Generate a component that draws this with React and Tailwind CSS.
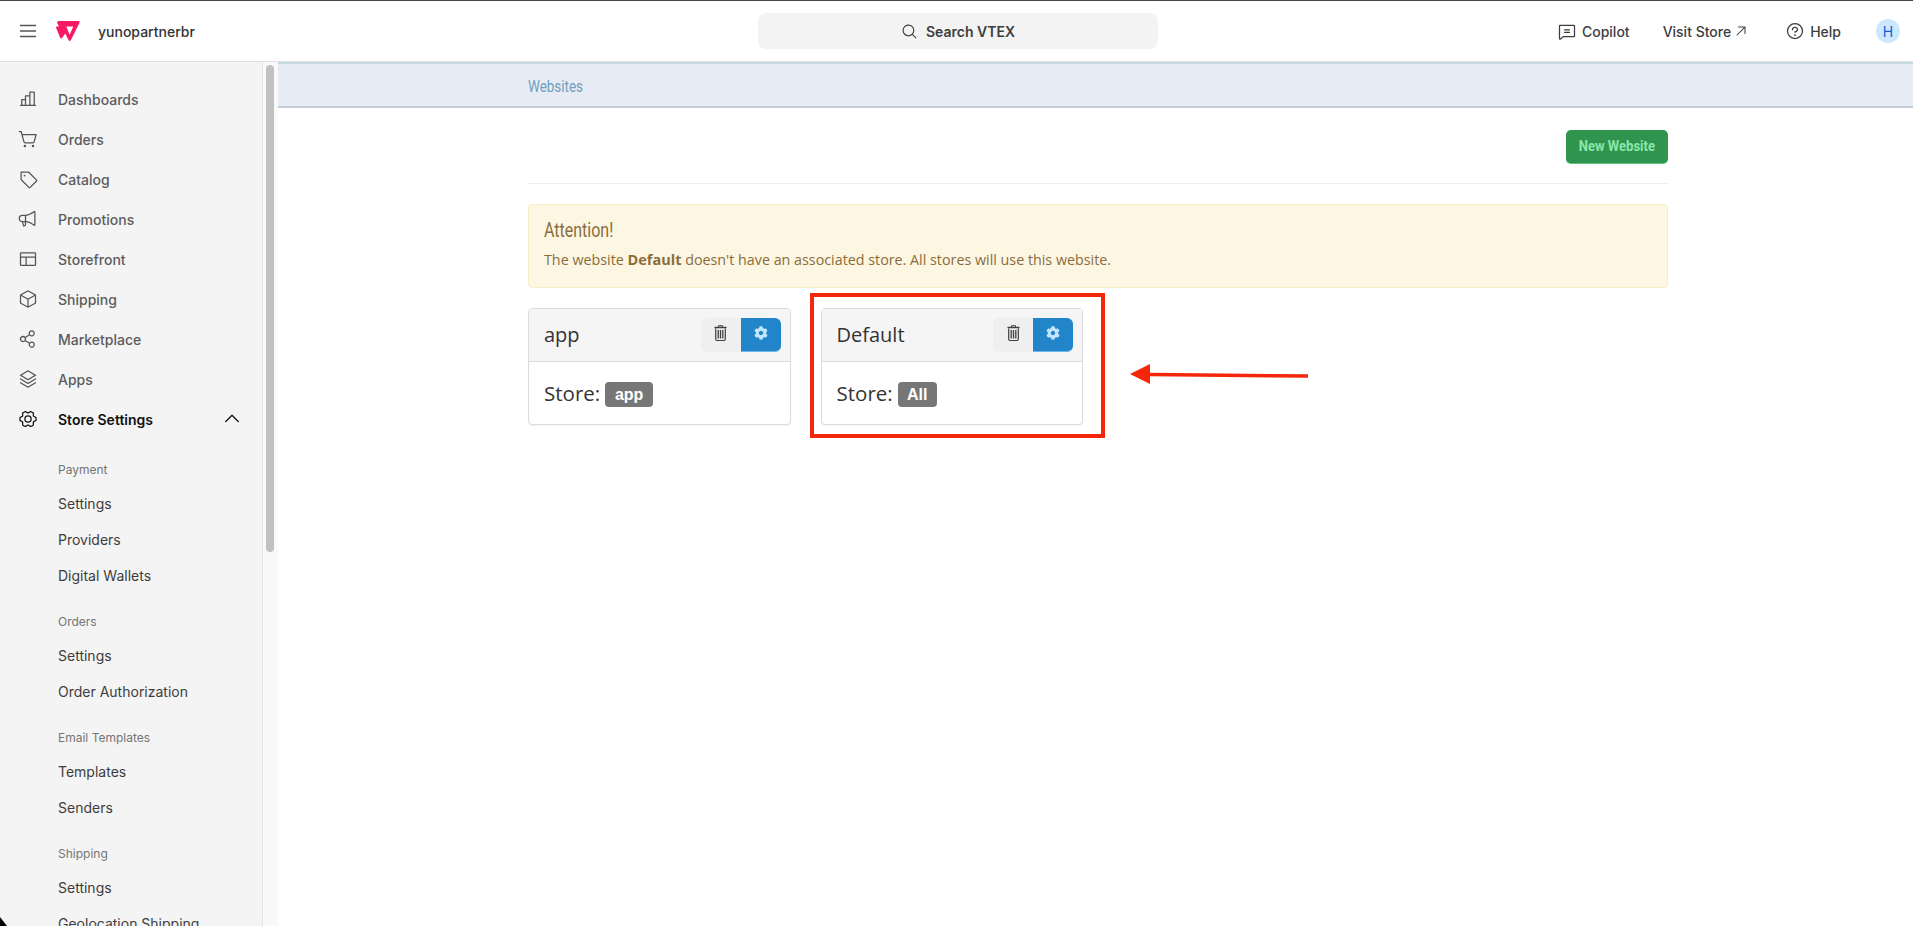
import {
  PiList,
  PiMagnifyingGlass,
  PiChatText,
  PiArrowUpRight,
  PiQuestion,
  PiChartBar,
  PiShoppingCartSimple,
  PiTag,
  PiMegaphone,
  PiLayout,
  PiCube,
  PiShareNetwork,
  PiStack,
  PiGearSix,
  PiCaretUp,
} from 'react-icons/pi';
import { FaCog } from 'react-icons/fa';

const navItems = [
  { label: 'Dashboards', icon: PiChartBar },
  { label: 'Orders', icon: PiShoppingCartSimple },
  { label: 'Catalog', icon: PiTag },
  { label: 'Promotions', icon: PiMegaphone, flip: true },
  { label: 'Storefront', icon: PiLayout },
  { label: 'Shipping', icon: PiCube },
  { label: 'Marketplace', icon: PiShareNetwork },
  { label: 'Apps', icon: PiStack },
];

const subGroups = [
  { title: 'Payment', items: ['Settings', 'Providers', 'Digital Wallets'] },
  { title: 'Orders', items: ['Settings', 'Order Authorization'] },
  { title: 'Email Templates', items: ['Templates', 'Senders'] },
  { title: 'Shipping', items: ['Settings', 'Geolocation Shipping'] },
];

function VtexLogo() {
  return (
    <svg width="24" height="20" viewBox="0 0 24 20" className="block">
      <path
        fill="#f71963"
        fillRule="evenodd"
        d="M2.6 0H22.4c1 0 1.500.8 1.100 1.700L14.800 19.200c-.5 1-1.700 1-2.200 0L9.300 12.500 6 17c-.5.700-1.300.600-1.700-.1L.2 7c-.4-.8.100-1.500 1-1.500H3L1.300 2.200C.9 1 1.500 0 2.600 0ZM10.300 5.400H17.300L13.600 13.800Z"
      />
    </svg>
  );
}

function TrashIcon() {
  return (
    <svg width="13" height="16" viewBox="0 0 13 16" className="mb-[5px] block" fill="none" stroke="#3f3f3f">
      <path d="M4.500 2V.7h4V2" />
      <path d="M.5 2.500h12" strokeWidth="1.400" />
      <path d="M1.700 3.500V14a1.500 1.500 0 0 0 1.500 1.500h6.600a1.500 1.500 0 0 0 1.500-1.500V3.500" strokeWidth="1.200" />
      <path d="M4.200 5v8.500M6.500 5v8.500M8.800 5v8.500" strokeWidth="1.300" />
    </svg>
  );
}

function WebsiteCard({ name, store, badgeWidth }) {
  return (
    <div className="w-[262.5px] overflow-hidden rounded-[4px] border border-[#dcdcdc] bg-white shadow-[0_1px_1px_rgba(0,0,0,0.05)]">
      <div className="flex h-[53px] items-center justify-between border-b border-[#dcdcdc] bg-[#f5f5f5] pl-[15px] pr-[9px]">
        <span className="text-[20px] text-[#333]">{name}</span>
        <div className="flex h-[34px]">
          <button className="flex w-[40px] items-center justify-center rounded-l-[6px] bg-[#efefef]">
            <TrashIcon />
          </button>
          <button className="flex w-[40px] items-center justify-center rounded-r-[6px] border-b border-[#6fb5e6] bg-[#2385c9] text-[#c4e6ff]">
            <FaCog size={14} className="mb-[3px]" />
          </button>
        </div>
      </div>
      <div className="flex h-[62px] items-center gap-[5px] pl-[15px] text-[20.5px] text-[#333]">
        <span>Store:</span>
        <span className={`mt-[3px] flex h-[25px] ${badgeWidth} items-center justify-center rounded-[4px] bg-[#777777] font-['Liberation_Sans',sans-serif] text-[16px] font-bold text-white`}>
          {store}
        </span>
      </div>
    </div>
  );
}

export default function App() {
  return (
    <div className="relative flex h-[926px] w-full flex-col overflow-hidden border-t border-[#444444] bg-white font-['Inter',sans-serif] text-[#3d3d3d]">
      <header className="relative flex h-[61px] shrink-0 items-center border-b border-[#e0e0e0] bg-white">
        <div className="flex w-[758px] items-center">
          <PiList size={22} className="ml-[17px] text-[#555]" />
          <span className="ml-[17px]"><VtexLogo /></span>
          <span className="ml-[18px] text-[14px] font-medium text-[#333]">yunopartnerbr</span>
        </div>
        <div className="flex h-[36px] w-[400px] items-center justify-center gap-[8px] rounded-[8px] bg-[#f3f3f3] text-[14px] font-semibold">
          <PiMagnifyingGlass size={17} />
          <span>Search VTEX</span>
        </div>
        <div className="ml-auto flex items-center text-[14px] font-medium">
          <PiChatText size={20} />
          <span className="ml-[5px]">Copilot</span>
          <span className="ml-[33px]">Visit Store</span>
          <PiArrowUpRight size={16} className="ml-[2px]" />
          <PiQuestion size={20} className="ml-[36px]" />
          <span className="ml-[5px]">Help</span>
          <span className="ml-[35px] mr-[13px] flex h-[24px] w-[24px] items-center justify-center rounded-full bg-[#cce8ff] text-[14px] font-normal text-[#0b5fd8]">H</span>
        </div>
      </header>

      <div className="flex min-h-0 flex-1">
        <aside className="flex w-[278px] shrink-0 overflow-hidden">
          <nav className="w-[263px] shrink-0 border-r border-[#e4e4e4] bg-[#f4f4f4] pt-[17px]">
            {navItems.map((item) => (
              <a key={item.label} className="flex h-[40px] items-center pl-[18px] text-[14px] font-medium text-[#5c5c5c]">
                <item.icon size={20} className={item.flip ? 'text-[#555] -scale-x-100' : 'text-[#555]'} />
                <span className="ml-[20px]">{item.label}</span>
              </a>
            ))}
            <a className="flex h-[40px] items-center pl-[18px] pr-[20px] text-[14px] font-semibold text-[#111]">
              <PiGearSix size={20} />
              <span className="ml-[20px]">Store Settings</span>
              <PiCaretUp size={20} className="ml-auto" />
            </a>
            <div className="pl-[58px] pt-[18px]">
              {subGroups.map((group) => (
                <div key={group.title} className="mb-[16px]">
                  <div className="mb-[4px] flex h-[24px] items-center pt-[2px] text-[12px] text-[#757575]">{group.title}</div>
                  {group.items.map((item) => (
                    <div key={item} className="flex h-[36px] items-center text-[14px] text-[#3d3d3d]">{item}</div>
                  ))}
                </div>
              ))}
            </div>
          </nav>
          <div className="w-[15px] bg-[#f9f9f9] pl-[3px] pt-[3px]">
            <div className="h-[487px] w-[8px] rounded-[4px] bg-[#c1c1c1]" />
          </div>
        </aside>

        <main className="min-w-0 flex-1 font-['Open_Sans',sans-serif]">
          <div className="flex h-[46px] items-center border-y-2 border-t-[#c9d9e2] border-b-[#c7ced9] bg-[#e7ecf4] pl-[250px] pt-[4px] font-['Roboto',sans-serif] text-[17px] text-[#6f9dbd]">
            <span className="inline-block origin-left scale-x-[0.79]">Websites</span>
          </div>
          <div className="ml-[250px] w-[1140px]">
            <div className="flex justify-end border-b border-[#eeeeee] pb-[19px] pt-[22px]">
              <button className="h-[34px] w-[102px] rounded-[5px] border-b border-[#5fc07f] bg-[#2f954e] font-['Roboto',sans-serif] text-[15px] font-bold text-[#8be6a8]">
                <span className="inline-block scale-x-[0.87]">New Website</span>
              </button>
            </div>
            <div className="mt-[20px] h-[84px] rounded-[4px] border border-[#f8ecc8] bg-[#fdf6e3] px-[15px] pt-[13px] text-[#8a6d3b]">
              <div className="font-['Roboto',sans-serif] text-[20px] leading-[24px]">
                <span className="inline-block origin-left scale-x-[0.8]">Attention!</span>
              </div>
              <p className="mt-[8px] text-[14.3px] leading-[20px]">
                The website <strong className="text-[14.5px]">Default</strong> doesn't have an associated store. All stores will use this website.
              </p>
            </div>
            <div className="mt-[20px] flex gap-[30px]">
              <WebsiteCard name="app" store="app" badgeWidth="w-[48px]" />
              <WebsiteCard name="Default" store="All" badgeWidth="w-[39px]" />
            </div>
          </div>
        </main>
      </div>

      {/* annotation drawn over the screenshot */}
      <div className="absolute left-[810px] top-[292px] h-[145px] w-[295px] border-[4px] border-[#f5270a]" />
      <svg className="absolute left-[1128px] top-[361px]" width="182" height="24" viewBox="0 0 182 24">
        <path d="M22 12.500 180 14" stroke="#f5270a" strokeWidth="3.500" fill="none" />
        <path d="M2 12 22 2v20Z" fill="#f5270a" />
      </svg>
      {/* mouse pointer cut off by the window corner */}
      <svg className="absolute bottom-0 left-0" width="8" height="9" viewBox="0 0 8 9">
        <path d="M0 0 7 9H0Z" fill="#000" />
      </svg>
    </div>
  );
}
